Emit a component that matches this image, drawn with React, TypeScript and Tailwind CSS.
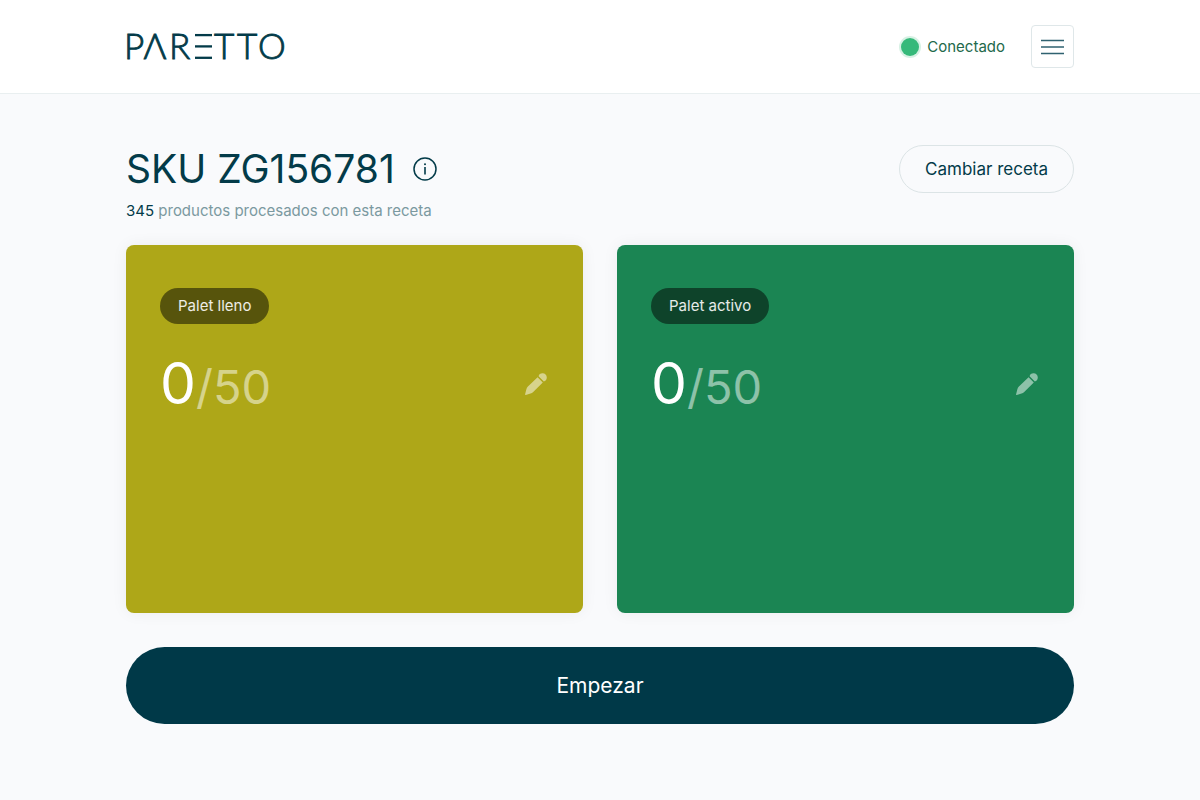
import { useState } from "react";

interface PalletCardProps {
  label: string;
  count: number;
  total: number;
  cardClass: string;
  badgeClass: string;
}

function Logo() {
  return (
    <svg
      width={160}
      height={28}
      viewBox="0 0 160 28"
      role="img"
      aria-label="Paretto"
      fill="#033b49"
      stroke="#033b49"
      strokeWidth={0.9}
      className="overflow-visible font-[Lato,sans-serif] text-[35px] font-light"
    >
      <text x="-2 17.5 43" y="26">
        PΛR
      </text>
      {/* the E is three loose bars */}
      <g strokeWidth={2.3}>
        <line x1={69} x2={86} y1={2.1} y2={2.1} />
        <line x1={69} x2={86} y1={13.4} y2={13.4} />
        <line x1={69} x2={86} y1={24.8} y2={24.8} />
      </g>
      <text x="88 111 132" y="26">
        TTO
      </text>
    </svg>
  );
}

function InfoIcon() {
  return (
    <svg width={24} height={24} viewBox="0 0 24 24" fill="none" stroke="#033b49" aria-hidden="true">
      <circle cx={12} cy={12} r={11} strokeWidth={1.5} />
      <path d="M12 10v7.5" strokeWidth={1.6} />
      <circle cx={12} cy={7.2} r={1} fill="#033b49" stroke="none" />
    </svg>
  );
}

function PencilIcon() {
  return (
    <svg width={24} height={24} viewBox="0 0 24 24" fill="currentColor" aria-hidden="true">
      <path d="M1.8 22.9 Q1 23.1 1.1 22.2 L2.3 17.4 C2.6 16.3 3.1 15.4 3.9 14.6 L13.6 5.2 L18.8 10.4 L9.2 20 C8.4 20.8 7.6 21.3 6.5 21.6 Z" />
      <path d="M14.6 4.2 C14.8 2.6 16.6 1.2 18.6 1.3 C21 1.4 22.8 3.2 22.8 5.4 C22.8 7.4 21.4 9.2 19.8 9.4 Z" />
    </svg>
  );
}

function PalletCard({ label, count, total, cardClass, badgeClass }: PalletCardProps) {
  return (
    <section
      className={`flex min-h-[368px] flex-col items-start rounded-lg px-[34px] pt-[43px] shadow-[0_0_16px_rgba(0,0,0,0.06)] ${cardClass}`}
    >
      <h2 className={`rounded-full px-[18px] py-2 text-[15px] leading-5 text-white/90 ${badgeClass}`}>
        {label}
      </h2>
      <div className="mt-7 flex w-full items-start justify-between">
        <p className="text-[47px] leading-[64px] text-white/50">
          <span className="text-[57px] text-white">{count}</span>/{total}
        </p>
        <button type="button" aria-label={`Editar ${label}`} className="mt-5 mr-px text-white/50">
          <PencilIcon />
        </button>
      </div>
    </section>
  );
}

export default function App() {
  const [menuOpen, setMenuOpen] = useState(false);

  return (
    <div className="min-h-screen bg-[#f9fafc] font-[Inter,sans-serif] text-[#033b49]">
      <header className="border-b border-[#e9eff0] bg-white">
        <div className="flex items-center justify-between px-6 py-[25px] lg:px-[126px]">
          <Logo />
          <div className="flex items-center">
            <span className="size-[18px] rounded-full bg-[#36b97a] ring-2 ring-[#36b97a]/20" />
            <span className="ml-2 text-[15px] leading-5 text-[#23694b]">Conectado</span>
            <button
              type="button"
              aria-label="Menú"
              aria-expanded={menuOpen}
              onClick={() => setMenuOpen(!menuOpen)}
              className="ml-[26px] flex size-[43px] items-center justify-center rounded-sm border border-[#dfe7e9]"
            >
              <svg width={23} height={16} viewBox="0 0 23 16" stroke="#2f6270" strokeWidth={1.3} aria-hidden="true">
                <path d="M0 1.5h23M0 8h23M0 14.5h23" />
              </svg>
            </button>
          </div>
        </div>
      </header>

      <main className="px-6 pt-[51px] pb-16 lg:px-[126px]">
        <div className="flex items-center justify-between">
          <div className="flex items-center gap-[18px]">
            <h1 className="text-[39px] leading-[48px]">SKU ZG156781</h1>
            <button type="button" aria-label="Información de la receta">
              <InfoIcon />
            </button>
          </div>
          <button
            type="button"
            className="rounded-full border border-[#dce4e6] px-[25px] py-[11px] text-[17px] leading-6"
          >
            Cambiar receta
          </button>
        </div>
        <p className="mt-2 text-[15px] leading-5 text-[#7b99a0]">
          <strong className="font-normal text-[#033b49]">345</strong> productos procesados con esta receta
        </p>

        <div className="mt-6 grid grid-cols-1 gap-[34px] md:grid-cols-2">
          <PalletCard label="Palet lleno" count={0} total={50} cardClass="bg-[#aea718]" badgeClass="bg-[#57540c]" />
          <PalletCard label="Palet activo" count={0} total={50} cardClass="bg-[#1b8553]" badgeClass="bg-[#0e432a]" />
        </div>

        <button
          type="button"
          className="mt-[34px] w-full rounded-full bg-[#003948] py-[22px] text-[21px] leading-[33px] text-white"
        >
          Empezar
        </button>
      </main>
    </div>
  );
}
